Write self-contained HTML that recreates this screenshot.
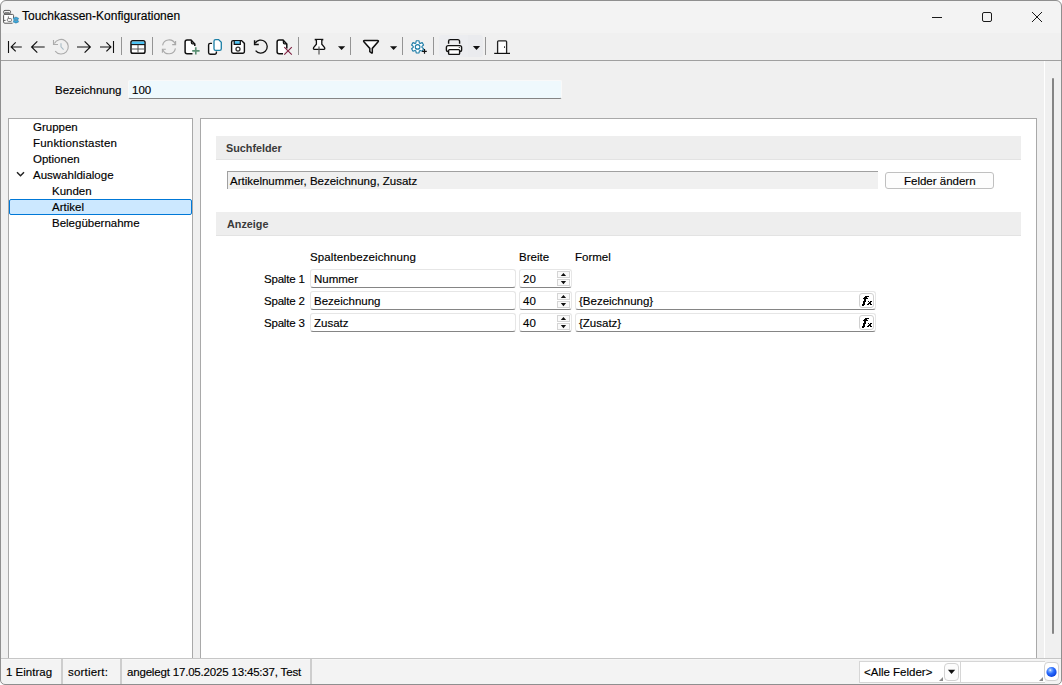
<!DOCTYPE html>
<html><head><meta charset="utf-8">
<style>
*{box-sizing:border-box;margin:0;padding:0}
html,body{width:1062px;height:685px;overflow:hidden;background:#fff}
body{font-family:"Liberation Sans",sans-serif;font-size:11.5px;color:#000;position:relative;-webkit-text-stroke:0.15px #000}
.a{position:absolute}
.t{position:absolute;line-height:16px;white-space:nowrap}
#win{position:absolute;left:0;top:0;width:1062px;height:685px;background:#f0f0f0;border-radius:6px 6px 5px 5px;overflow:hidden}
#title{position:absolute;left:0;top:0;width:1062px;height:33px;background:#f3f3f3}
.sep{position:absolute;top:37px;width:1px;height:18px;background:#949494}
.box{position:absolute;background:#fff;border:1px solid #a9a9a9;border-bottom:none}
.band{position:absolute;left:216px;width:805px;height:24px;background:#eeeeee;border-bottom:1px solid #e3e3e3}
.hd{font-weight:bold;color:#3a3a3a;font-size:10.8px;-webkit-text-stroke:0}
.inp{position:absolute;background:#fff;border:1px solid #e6e6e6;border-bottom:1px solid #858585;border-radius:3px}
.spin{position:absolute;width:13px;height:7px;background:#fafafa;border:1px solid #d5d5d5}
.fx{position:absolute;width:15px;height:15px;border:1px solid #d0d0d0;border-radius:3px;background:#fff}
.st{position:absolute;top:659px;height:25px;background:#f3f3f3}
.stsep{position:absolute;top:659px;width:2px;height:25px;background:#cdcdcd}
</style></head><body>
<div id="win">
  <div id="title"></div>
</div>

<!-- title -->
<svg class="a" style="left:0;top:6px" width="22" height="22" viewBox="0 6 22 22">
 <rect x="3.6" y="10.4" width="7" height="3.4" rx="1.4" fill="#fff" stroke="#555" stroke-width="1"/>
 <path d="M4.6 12.4H9.6" stroke="#777" stroke-width="1"/>
 <path d="M13.6 18.2V15.6Q13.6 14.4 12.4 14.4H4.8Q3.6 14.4 3.6 15.6V22Q3.6 23.2 4.8 23.2H12.6" fill="#fff" stroke="#555" stroke-width="1"/>
 <path d="M3.6 20.4H5.6" stroke="#555" stroke-width="1"/>
 <path d="M8.4 16.4V18.6H7.8Q7.2 18.8 7.4 20.6Q7.6 21.4 8.4 21.4H11Q11.6 21.4 11.6 20.6V19.4Q11.6 18.6 10.8 18.6H8.6" fill="none" stroke="#666" stroke-width="0.9"/>
 <g transform="translate(15.9 20.1) scale(0.85)">
  <path d="M-1 -3.4H1L1.4 -2.4L2.5 -2.9L3.3 -1.6L2.4 -0.9V0.9L3.3 1.6L2.5 2.9L1.4 2.4L1 3.4H-1L-1.4 2.4L-2.5 2.9L-3.3 1.6L-2.4 0.9V-0.9L-3.3 -1.6L-2.5 -2.9L-1.4 -2.4Z" fill="#3fa9dc" stroke="#1d6e98" stroke-width="0.6"/>
  <circle r="1.1" fill="#7a8a94"/>
 </g>
</svg>

<div class="t" style="left:22px;top:8px;font-size:12px">Touchkassen-Konfigurationen</div>

<!-- window controls -->
<svg class="a" style="left:925px;top:5px" width="130" height="24" viewBox="925 5 130 24">
  <path d="M932 17.5H942" stroke="#1a1a1a" stroke-width="1"/>
  <rect x="982.5" y="12.5" width="9" height="9" rx="1.5" fill="none" stroke="#1a1a1a" stroke-width="1"/>
  <path d="M1032 12L1042 22M1042 12L1032 22" stroke="#1a1a1a" stroke-width="1"/>
</svg>

<!-- toolbar line -->
<div class="a" style="left:1px;top:60px;width:1060px;height:1px;background:#a0a0a0"></div>

<div class="a" style="left:439px;top:35px;width:29px;height:22px;background:#ecedf0;border-radius:3px 0 0 3px"></div>
<div class="a" style="left:468px;top:35px;width:15px;height:22px;background:#eaebee;border-radius:0 3px 3px 0"></div>
<svg class="a" style="left:0;top:32px" width="520" height="28" viewBox="0 32 520 28">
 <g fill="none" stroke="#111" stroke-width="1.2" stroke-linecap="butt" stroke-linejoin="miter">
  <!-- first -->
  <path d="M8.5 41V53" stroke-width="1.1"/>
  <path d="M11 47H21.8M15.7 42.4L11.2 46.9L15.7 51.4"/>
  <!-- prev -->
  <path d="M31.6 47H44.7M37.3 41.3L31.6 47L37.3 52.7"/>
  <!-- history -->
  <g stroke="#ababab" stroke-width="1.1">
   <path d="M55.2 51.2A7.3 7.3 0 1 0 54.4 43.6"/>
   <path d="M53.5 40V44.5H58"/>
  </g>
  <path d="M61 43.3V46.8L63.6 49.6" stroke="#a9bcc6" stroke-width="1.1"/>
  <!-- next -->
  <path d="M77 47H90.4M84.6 41.3L90.3 47L84.6 52.7"/>
  <!-- last -->
  <path d="M100 47H110.5M106.4 42.4L110.9 46.9L106.4 51.4"/>
  <path d="M113.5 41V53" stroke-width="1.1"/>
  <!-- table -->
  <rect x="131" y="40.8" width="14" height="12.4" rx="1.8" fill="#fff" stroke-width="1.5"/>
  <path d="M131.8 41.6H144.2V44.2H131.8Z" fill="#4cc3f5" stroke="none"/>
  <path d="M131 44.6H145" stroke-width="1.1"/>
  <path d="M131.5 49H144.5M138 44.8V52.6" stroke="#555" stroke-width="1"/>
  <!-- refresh -->
  <g stroke="#a8a8a8" stroke-width="1.1">
   <path d="M162.6 45.4A6.6 6.6 0 0 1 175.1 43.8"/>
   <path d="M175.6 41V44.6H172.2"/>
   <path d="M175.4 48.3A6.6 6.6 0 0 1 162.9 49.9"/>
   <path d="M162.4 52.8V49.3H165.8"/>
  </g>
  <!-- new -->
  <path d="M194.8 46V44L191 40.1H187.1A2 2 0 0 0 185.1 42.1V51.8A2 2 0 0 0 187.1 53.8H192.5" fill="#fff" stroke-width="1.5"/>
  <path d="M191.4 40.3V42.6Q191.4 43.8 192.6 43.8H194.8" stroke-width="1.3"/>
  <path d="M192.2 50.9H199.6M195.8 47.3V54.5" stroke="#5a9073" stroke-width="1.6"/>
  <!-- copy -->
  <path d="M212 43.4H210.2A1.6 1.6 0 0 0 208.6 45V52.6A1.6 1.6 0 0 0 210.2 54.2H214.8A1.6 1.6 0 0 0 216.4 52.6V51.6" fill="#fff" stroke-width="1.4"/>
  <path d="M215.6 39.6H218.6L221.3 42.3V48.8A1.6 1.6 0 0 1 219.7 50.4H215.6A1.6 1.6 0 0 1 214 48.8V41.2A1.6 1.6 0 0 1 215.6 39.6Z" fill="#fff" stroke="#1b7fa6" stroke-width="1.3"/>
  <!-- save -->
  <path d="M233.2 40.6H241.6L244.4 43.4V51.6A1.6 1.6 0 0 1 242.8 53.2H233.2A1.6 1.6 0 0 1 231.6 51.6V42.2A1.6 1.6 0 0 1 233.2 40.6Z" fill="#fff" stroke-width="1.4"/>
  <path d="M234 41.2H240.4V44H234Z" fill="#4cc3f5" stroke="none"/>
  <path d="M234.2 40.6V44.3H240.3V40.6" stroke-width="1.2"/>
  <circle cx="238" cy="49.1" r="2" stroke="#333" stroke-width="1.3"/>
  <!-- undo -->
  <path d="M255.6 50.6A6.5 6.5 0 1 0 255.2 43.2" stroke-width="1.3"/>
  <path d="M254.6 40.2V44.4H258.8" stroke-width="1.5"/>
  <!-- delete -->
  <path d="M286.8 48.6V44L283 40.1H279.1A2 2 0 0 0 277.1 42.1V51.8A2 2 0 0 0 279.1 53.8H283" fill="#fff" stroke-width="1.5"/>
  <path d="M283.4 40.3V42.6Q283.4 43.8 284.6 43.8H286.8" stroke-width="1.3"/>
  <path d="M284.3 47.2L291.8 54.6M291.8 47.2L284.3 54.6" stroke="#7d1c3e" stroke-width="1.1"/>
  <!-- pin -->
  <path d="M314.7 39.6H323.3" stroke-width="1.6"/>
  <path d="M316.4 40V44.2L313.6 47.6Q313 49.3 314.4 49.3H323.8Q325.2 49.3 324.6 47.6L321.8 44.2V40" fill="#fff" stroke-width="1.3"/>
  <path d="M319 46.4V54.6" stroke="#555" stroke-width="1.2"/>
  <!-- filter -->
  <path d="M364.6 40.6H377.4Q379 40.6 378.1 41.8L372.3 48.4V52.6Q372.3 53.6 371.5 53L369.8 51.6V48.4L363.9 41.8Q363 40.6 364.6 40.6Z" fill="#fff" stroke-width="1.5"/>
  <!-- gear -->
  <g transform="translate(417.6 46.9)">
   <path id="gearp" d="M-1.83 -4.22 L-1.48 -6.43 L1.48 -6.43 L1.83 -4.22 L2.74 -3.70 L4.83 -4.50 L6.31 -1.93 L4.57 -0.52 L4.57 0.52 L6.31 1.93 L4.83 4.50 L2.74 3.70 L1.83 4.22 L1.48 6.43 L-1.48 6.43 L-1.83 4.22 L-2.74 3.70 L-4.83 4.50 L-6.31 1.93 L-4.57 0.52 L-4.57 -0.52 L-6.31 -1.93 L-4.83 -4.50 L-2.74 -3.70Z" fill="#fff" stroke="#1f7ea8" stroke-width="1.2" stroke-linejoin="round" transform="scale(0.95)"/>
   <circle r="2.3" stroke="#1f7ea8" stroke-width="1.2"/>
  </g>
  <path d="M422.1 51.4H426.8M424.5 49.1V53.7" stroke-width="1.2"/>
  <!-- printer -->
  <path d="M448.6 43.8V41.2A1.6 1.6 0 0 1 450.2 39.6H457.8A1.8 1.8 0 0 1 459.6 41.4V43.8" stroke-width="1.4"/>
  <rect x="446.4" y="45.6" width="15.2" height="6" rx="1.8" fill="#fff" stroke-width="1.4"/>
  <rect x="448.6" y="49.6" width="11" height="4.8" rx="1" fill="#fff" stroke-width="1.4"/>
  <circle cx="459.3" cy="47.3" r="0.6" fill="#111" stroke="none"/>
  <!-- door -->
  <path d="M497.6 53V41.8Q497.6 40.8 498.6 40.8H505.6Q506.6 40.8 506.6 41.8V53" fill="#fff" stroke="#222" stroke-width="1.3"/>
  <path d="M494.2 53.4H510" stroke-width="1.2"/>
  <path d="M504.5 46.4V47.8" stroke-width="1"/>
 </g>
 <g fill="#111">
  <path d="M338 46.2H345.2L341.6 49.9Z"/>
  <path d="M390 46.2H397.2L393.6 49.9Z"/>
  <path d="M472.9 46.1H480.1L476.5 49.9Z"/>
 </g>
</svg>

<!-- separators -->
<div class="sep" style="left:121px"></div>
<div class="sep" style="left:152px"></div>
<div class="sep" style="left:298px"></div>
<div class="sep" style="left:350px"></div>
<div class="sep" style="left:402px"></div>
<div class="sep" style="left:433px"></div>
<div class="sep" style="left:485px"></div>

<!-- Bezeichnung -->
<div class="t" style="left:55px;top:82px">Bezeichnung</div>
<div class="a" style="left:128px;top:80px;width:434px;height:19px;background:#eff9fd;border:1px solid #f9f9f9;border-bottom:1px solid #858585;border-radius:2px"></div>
<div class="t" style="left:132px;top:82px">100</div>

<!-- tree box -->
<div class="box" style="left:8px;top:118px;width:185px;height:541px"></div>
<div class="t" style="left:33px;top:119px">Gruppen</div>
<div class="t" style="left:33px;top:135px;letter-spacing:0.2px">Funktionstasten</div>
<div class="t" style="left:33px;top:151px">Optionen</div>
<svg class="a" style="left:14px;top:169px" width="12" height="10"><path d="M3 3.2L6.5 6.7L10 3.2" fill="none" stroke="#222" stroke-width="1.5"/></svg>
<div class="t" style="left:33px;top:167px">Auswahldialoge</div>
<div class="t" style="left:52px;top:183px">Kunden</div>
<div class="a" style="left:9px;top:199px;width:183px;height:16px;background:#cce8ff;border:1px solid #0078d7;border-radius:2px"></div>
<div class="t" style="left:52px;top:199px">Artikel</div>
<div class="t" style="left:52px;top:215px">Belegübernahme</div>

<!-- right box -->
<div class="box" style="left:200px;top:118px;width:837px;height:541px"></div>
<div class="band" style="top:136px"></div>
<div class="t hd" style="left:226px;top:140px">Suchfelder</div>
<div class="a" style="left:227px;top:171px;width:651px;height:18px;background:#f0f0f0;border-top:1px solid #a0a0a0;border-left:1px solid #a0a0a0"></div>
<div class="t" style="left:230px;top:173px">Artikelnummer, Bezeichnung, Zusatz</div>
<div class="a" style="left:885px;top:172px;width:109px;height:17px;background:#fdfdfd;border:1px solid #c0c0c0;border-radius:3px"></div>
<div class="t" style="left:904px;top:173px">Felder ändern</div>

<div class="band" style="top:212px"></div>
<div class="t hd" style="left:227px;top:216px">Anzeige</div>

<div class="t" style="left:310px;top:249px;letter-spacing:0.1px">Spaltenbezeichnung</div>
<div class="t" style="left:519px;top:249px">Breite</div>
<div class="t" style="left:575px;top:249px">Formel</div>

<div class="t" style="left:264px;top:271px;letter-spacing:-0.2px">Spalte 1</div>
<div class="t" style="left:264px;top:293px;letter-spacing:-0.2px">Spalte 2</div>
<div class="t" style="left:264px;top:315px;letter-spacing:-0.2px">Spalte 3</div>

<div class="inp" style="left:310px;top:269px;width:206px;height:19px"></div>
<div class="t" style="left:314px;top:271px">Nummer</div>
<div class="inp" style="left:519px;top:269px;width:53px;height:19px"></div>
<div class="t" style="left:523px;top:271px">20</div>
<div class="spin" style="left:557px;top:271px"></div>
<div class="spin" style="left:557px;top:279px"></div>
<svg class="a" style="left:557px;top:270px" width="14" height="18"><path d="M3.8 6H9.1L6.45 3.1Z M3.8 11.1H9.1L6.45 14.2Z" fill="#111"/></svg>
<div class="inp" style="left:310px;top:291px;width:206px;height:19px"></div>
<div class="t" style="left:314px;top:293px">Bezeichnung</div>
<div class="inp" style="left:519px;top:291px;width:53px;height:19px"></div>
<div class="t" style="left:523px;top:293px">40</div>
<div class="spin" style="left:557px;top:293px"></div>
<div class="spin" style="left:557px;top:301px"></div>
<svg class="a" style="left:557px;top:292px" width="14" height="18"><path d="M3.8 6H9.1L6.45 3.1Z M3.8 11.1H9.1L6.45 14.2Z" fill="#111"/></svg>
<div class="inp" style="left:575px;top:291px;width:301px;height:19px"></div>
<div class="t" style="left:579px;top:293px">{Bezeichnung}</div>
<div class="fx" style="left:859px;top:293px"></div>
<svg class="a" style="left:862px;top:296px" width="11" height="11" shape-rendering="crispEdges"><path d="M3 0h4v1h-4zM2 1h3v1h-3zM1 2h5v1h-5zM2 3h2v2h-2zM1 5h3v1h-3zM1 6h2v2h-2zM0 8h3v1h-3zM0 9h2v1h-2zM6 5h1v1h-1zM8 5h2v1h-2zM7 6h2v1h-2zM6 7h3v1h-3zM5 8h2v1h-2zM8 8h2v1h-2z" fill="#000"/></svg>
<div class="inp" style="left:310px;top:313px;width:206px;height:19px"></div>
<div class="t" style="left:314px;top:315px">Zusatz</div>
<div class="inp" style="left:519px;top:313px;width:53px;height:19px"></div>
<div class="t" style="left:523px;top:315px">40</div>
<div class="spin" style="left:557px;top:315px"></div>
<div class="spin" style="left:557px;top:323px"></div>
<svg class="a" style="left:557px;top:314px" width="14" height="18"><path d="M3.8 6H9.1L6.45 3.1Z M3.8 11.1H9.1L6.45 14.2Z" fill="#111"/></svg>
<div class="inp" style="left:575px;top:313px;width:301px;height:19px"></div>
<div class="t" style="left:579px;top:315px">{Zusatz}</div>
<div class="fx" style="left:859px;top:315px"></div>
<svg class="a" style="left:862px;top:318px" width="11" height="11" shape-rendering="crispEdges"><path d="M3 0h4v1h-4zM2 1h3v1h-3zM1 2h5v1h-5zM2 3h2v2h-2zM1 5h3v1h-3zM1 6h2v2h-2zM0 8h3v1h-3zM0 9h2v1h-2zM6 5h1v1h-1zM8 5h2v1h-2zM7 6h2v1h-2zM6 7h3v1h-3zM5 8h2v1h-2zM8 8h2v1h-2z" fill="#000"/></svg>

<!-- scrollbar -->
<div class="a" style="left:1044px;top:61px;width:1px;height:597px;background:#fff"></div>
<div class="a" style="left:1052px;top:78px;width:2px;height:556px;background:#858585;border-radius:1px"></div>

<!-- status bar -->
<div class="a" style="left:1px;top:658px;width:1060px;height:1px;background:#c6c6c6"></div>
<div class="st" style="left:1px;width:1060px;height:26px;border-top:1px solid #f7f7f7"></div>
<div class="stsep" style="left:61px"></div>
<div class="stsep" style="left:120px"></div>
<div class="stsep" style="left:310px"></div>
<div class="t" style="left:6px;top:664px">1 Eintrag</div>
<div class="t" style="left:68px;top:664px;letter-spacing:0.2px">sortiert:</div>
<div class="t" style="left:127px;top:664px;letter-spacing:-0.18px">angelegt 17.05.2025 13:45:37, Test</div>
<!-- combo -->
<div class="a" style="left:859px;top:661px;width:186px;height:22px;background:#fff;border:1px solid #d6d6d6;border-right:none"></div>
<div class="a" style="left:960px;top:661px;width:1px;height:22px;background:#d6d6d6"></div>
<div class="t" style="left:864px;top:664px">&lt;Alle Felder&gt;</div>
<svg class="a" style="left:936px;top:674px" width="10" height="10"><path d="M7 3V7H3Z" fill="#8a8a8a"/></svg>
<svg class="a" style="left:1036px;top:674px" width="10" height="10"><path d="M7 3V7H3Z" fill="#8a8a8a"/></svg>
<div class="a" style="left:944px;top:663px;width:15px;height:18px;background:#fcfcfc;border:1px solid #d2d2d2;border-radius:4px"></div>
<svg class="a" style="left:944px;top:663px" width="15" height="18"><path d="M3.9 6.8H11.2L7.55 11.1Z" fill="#111"/></svg>
<div class="a" style="left:1044px;top:662px;width:15px;height:19px;background:#fff;border:1px solid #d2d2d2;border-radius:4px"></div>
<svg class="a" style="left:1044px;top:662px" width="15" height="19" viewBox="0 0 15 19">
 <defs><radialGradient id="ball" cx="0.38" cy="0.32" r="0.7"><stop offset="0" stop-color="#ffffff"/><stop offset="0.18" stop-color="#7fb0ff"/><stop offset="0.5" stop-color="#2a6cff"/><stop offset="1" stop-color="#0a3fd8"/></radialGradient></defs>
 <circle cx="7.5" cy="10" r="5.1" fill="url(#ball)"/>
</svg>
<!-- window frame -->
<div class="a" style="left:0;top:0;width:1062px;height:685px;border:1px solid #8f8f8f;border-radius:6px 6px 5px 5px;box-shadow:0 0 0 12px #fff;pointer-events:none"></div>
</body></html>
